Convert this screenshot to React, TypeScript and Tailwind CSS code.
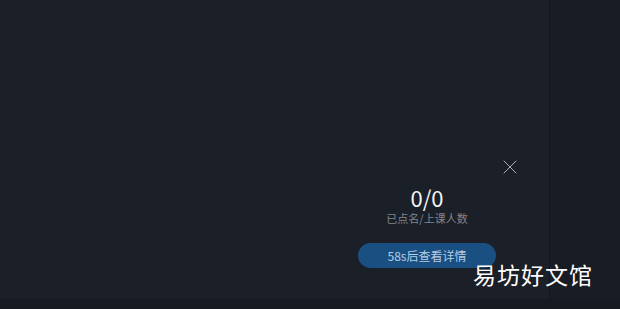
import { X } from "lucide-react";

export default function App() {
  return (
    <div className="relative w-[620px] h-[309px] overflow-hidden bg-[#161a21] font-['Microsoft_YaHei','Noto_Sans_CJK_SC',sans-serif]">
      <div className="flex h-[299px]">
        {/* main stage */}
        <div className="w-[549px] h-full bg-[#1b1f27] pl-[358px] pt-[155px]">
          <div className="relative w-[164px]">
            <button className="absolute right-0 top-0 text-[#b9bec6]">
              <X className="w-[24px] h-[24px]" strokeWidth={0.9} />
            </button>
            <div className="w-[138px] pt-[29px] flex flex-col items-center">
              <p className="text-[22px] leading-[26px] text-[#f2f4f7]">0/0</p>
              <p className="text-[11px] leading-[14px] text-[#80858e] mt-[1px]">已点名/上课人数</p>
              <div className="mt-[18px] w-[138px] h-[25px] rounded-full bg-[#1a4f82] flex items-center justify-center text-[12px] text-[#b7cde4]">
                58s后查看详情
              </div>
            </div>
          </div>
        </div>
        <div className="w-px h-full bg-[#14181e]" />
        {/* side panel */}
        <div className="flex-1 h-full bg-[#181d25]" />
      </div>

      {/* watermark */}
      <div className="absolute left-[473px] top-[259px] text-[23px] leading-[30px] text-white tracking-[1px]">
        易坊好文馆
      </div>
    </div>
  );
}
